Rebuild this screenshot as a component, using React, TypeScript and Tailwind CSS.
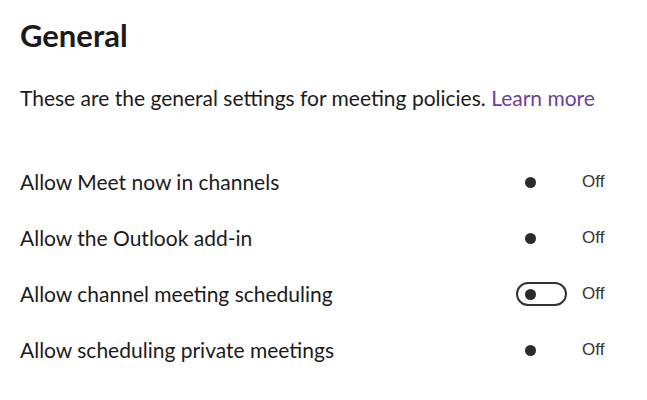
const rows = [
  { label: 'Allow Meet now in channels', framed: false },
  { label: 'Allow the Outlook add-in', framed: false },
  { label: 'Allow channel meeting scheduling', framed: true },
  { label: 'Allow scheduling private meetings', framed: false },
]

export default function App() {
  return (
    <div className="w-[647px] h-[400px] bg-white text-[#1b1b1b] font-['Lato',sans-serif]">
      <div className="pl-5 pt-[17px]">
        <h1 className="text-[31px] font-bold leading-[36px]">General</h1>
        <p className="mt-[31px] text-[21px] leading-[28px]">
          These are the general settings for meeting policies.{' '}
          <a href="#" className="text-[#6b3fa0]">Learn more</a>
        </p>
        <div className="mt-[56px] flex flex-col gap-[28px]">
          {rows.map((row) => (
            <div key={row.label} className="flex items-center h-[28px]">
              <span className="w-[496px] text-[21px] leading-[28px]">{row.label}</span>
              <span
                className={
                  'w-[51px] h-[24px] rounded-full flex items-center pl-[7px] border-2 ' +
                  (row.framed ? 'border-[#333]' : 'border-transparent')
                }
              >
                <span className="w-[11px] h-[11px] rounded-full bg-[#2b2b2b]" />
              </span>
              <span className="ml-[15px] text-[17px] text-[#333] font-['Liberation_Sans',sans-serif]">Off</span>
            </div>
          ))}
        </div>
      </div>
    </div>
  )
}
